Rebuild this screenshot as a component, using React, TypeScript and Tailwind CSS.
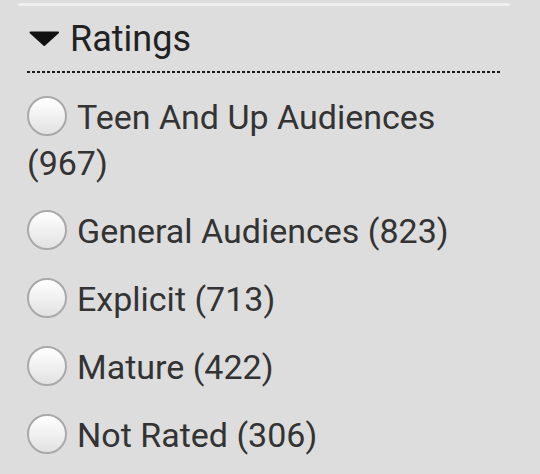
import React, { useState } from 'react';

const RATINGS = [
  { id: 'teen', name: 'Teen And Up Audiences', count: 967 },
  { id: 'general', name: 'General Audiences', count: 823 },
  { id: 'explicit', name: 'Explicit', count: 713 },
  { id: 'mature', name: 'Mature', count: 422 },
  { id: 'notrated', name: 'Not Rated', count: 306 },
];

export default function App() {
  const [open, setOpen] = useState(true);
  const [selected, setSelected] = useState<string | null>(null);

  return (
    <div className="w-[540px] h-[474px] overflow-hidden bg-[#dddddd] font-['Roboto',sans-serif]">
      <div className="mx-[18px] mt-[3px] h-[3px] w-[492px] rounded-full bg-[#efefef]" />

      <div className="pl-[27px] pr-[38px]">
        <button
          type="button"
          onClick={() => setOpen(o => !o)}
          className="flex items-center mt-[11px] h-[44px] text-[36px] leading-none text-[#222222]"
        >
          <svg width="43" height="16" viewBox="0 0 43 16" className="shrink-0">
            <path d="M3.5 1.5 L31 1.5 L17.25 14 Z" fill="#111111" stroke="#111111" strokeWidth="2" strokeLinejoin="round" />
          </svg>
          <span>Ratings</span>
        </button>
        <div className="mt-[10px] h-[2px] bg-[repeating-linear-gradient(to_right,#1a1a1a_0_3px,transparent_3px_5px)]" />

        {open && (
          <ul className="mt-[21px]">
            {RATINGS.map(r => (
              <li key={r.id} className="mb-[22px] text-[34px] leading-[46px] text-[#333333]">
                <label className="cursor-pointer">
                  <input
                    type="radio"
                    name="rating"
                    checked={selected === r.id}
                    onChange={() => setSelected(r.id)}
                    className="sr-only"
                  />
                  <span className="inline-block align-[-7px] mr-[10px] w-[40px] h-[40px] rounded-full border-2 border-[#a9a9a9] bg-gradient-to-b from-white to-[#e2e2e2]" />
                  {r.name} ({r.count})
                </label>
              </li>
            ))}
          </ul>
        )}
      </div>
    </div>
  );
}
